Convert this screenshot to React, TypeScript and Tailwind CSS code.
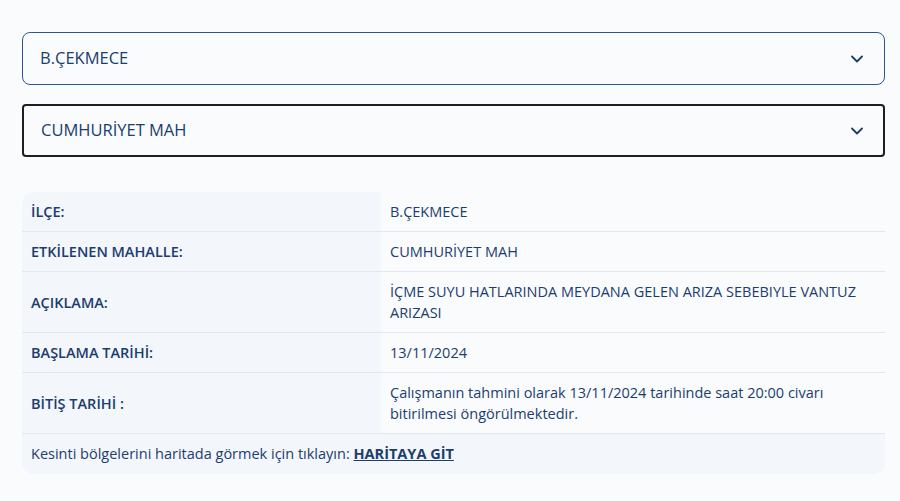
import { ChevronDown } from "lucide-react";

const rows = [
  { label: "İLÇE:", value: "B.ÇEKMECE" },
  { label: "ETKİLENEN MAHALLE:", value: "CUMHURİYET MAH" },
  {
    label: "AÇIKLAMA:",
    value: "İÇME SUYU HATLARINDA MEYDANA GELEN ARIZA SEBEBIYLE VANTUZ ARIZASI",
  },
  { label: "BAŞLAMA TARİHİ:", value: "13/11/2024" },
  {
    label: "BİTİŞ TARİHİ :",
    value:
      "Çalışmanın tahmini olarak 13/11/2024 tarihinde saat 20:00 civarı bitirilmesi öngörülmektedir.",
  },
];

const Select = ({ value, focused }: { value: string; focused?: boolean }) => (
  <div
    className={
      focused
        ? "flex items-center justify-between h-[53px] pl-[17px] pr-[16px] rounded-[4px] border-2 border-[#1f1f1f] bg-[#f9fbfd]"
        : "flex items-center justify-between h-[53px] pl-[17px] pr-[17px] rounded-[8px] border border-[#2c5597] bg-[#f9fbfd]"
    }
  >
    <span className="text-[16.5px] text-[#1c3d6e]">{value}</span>
    <ChevronDown size={20} strokeWidth={2.2} className="text-[#1c3d6e]" />
  </div>
);

export default function App() {
  return (
    <div className="w-[900px] h-[501px] bg-[#f9fbfd] pt-8 pl-[22px] pr-[15px] font-['Open_Sans',sans-serif] text-[#1c3d6e] overflow-hidden">
      <div className="flex flex-col gap-[19px]">
        <Select value="B.ÇEKMECE" />
        <Select value="CUMHURİYET MAH" focused />
      </div>

      <div className="mt-[35px] rounded-[12px] overflow-hidden bg-[#f3f6fb]">
        <div className="grid grid-cols-[359px_1fr] text-[14.5px] leading-[21px]">
          {rows.map((r) => (
            <div key={r.label} className="contents">
              <div className="flex items-center px-[9px] py-[9px] border-b border-[#e4e8ee] font-semibold">
                {r.label}
              </div>
              <div className="flex items-center pl-[9px] pr-[12px] py-[9px] border-b border-[#e4e8ee] bg-[#f9fbfd]">
                {r.value}
              </div>
            </div>
          ))}
        </div>
        <div className="px-[9px] py-[10px] text-[14.5px] leading-[20px]">
          Kesinti bölgelerini haritada görmek için tıklayın:{" "}
          <a href="#" className="font-bold underline">
            HARİTAYA GİT
          </a>
        </div>
      </div>
    </div>
  );
}
